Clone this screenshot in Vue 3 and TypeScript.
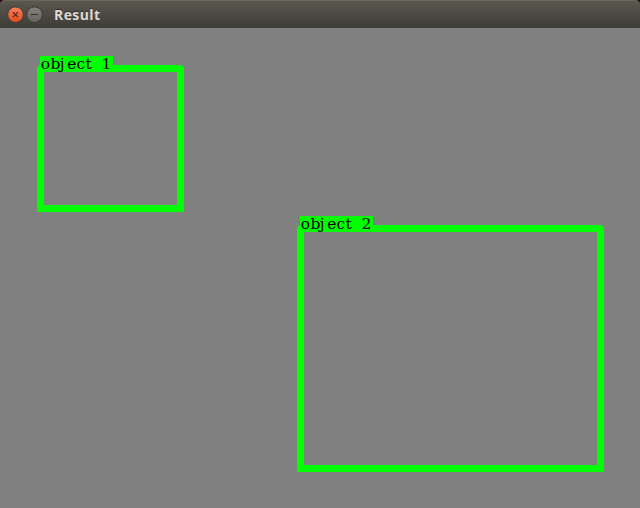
<script setup lang="ts">
interface Detection {
  label: string
  x: number
  y: number
  width: number
  height: number
}

const detections: Detection[] = [
  { label: 'object 1', x: 40, y: 40, width: 140, height: 140 },
  { label: 'object 2', x: 300, y: 200, width: 300, height: 240 },
]
const glyphOffsets = '0.7 10.6 19.8 27.2 36.4 45.6 55 61.6'
</script>

<template>
  <main class="window">
    <header class="titlebar">
      <svg class="controls" width="40" height="18" viewBox="0 0 40 18">
        <defs>
          <linearGradient id="close" x1="0" y1="0" x2="0" y2="1">
            <stop offset="0" stop-color="#f58058" />
            <stop offset="1" stop-color="#dc4d20" />
          </linearGradient>
          <linearGradient id="minimize" x1="0" y1="0" x2="0" y2="1">
            <stop offset="0" stop-color="#85827a" />
            <stop offset="1" stop-color="#64625b" />
          </linearGradient>
        </defs>
        <circle cx="9.5" cy="8.7" r="7.8" fill="url(#close)" stroke="#35322d" stroke-width="0.8" />
        <path d="M7 6.2l5 5M12 6.2l-5 5" stroke="#4a2418" stroke-width="1.1" />
        <circle cx="28.5" cy="8.7" r="7.8" fill="url(#minimize)" stroke="#35322d" stroke-width="0.8" />
        <path d="M25 8.5h7" stroke="#34332e" />
      </svg>
      <h1 class="title">Result</h1>
    </header>
    <svg class="canvas" width="640" height="480" viewBox="0 0 640 480">
      <g v-for="d in detections" :key="d.label">
        <rect
          class="outline"
          :x="d.x + 0.5"
          :y="d.y + 0.5"
          :width="d.width"
          :height="d.height"
        />
        <g :transform="`translate(${d.x} ${d.y - 12})`">
          <rect class="tag" width="73" height="16" />
          <text class="label" :x="glyphOffsets" y="13">{{ d.label }}</text>
        </g>
      </g>
    </svg>
  </main>
</template>

<style>
body {
  margin: 0;
  background: #808080;
}
</style>

<style scoped>
.window {
  width: 640px;
  height: 508px;
  overflow: hidden;
  background: #2c001e;
}
.titlebar {
  box-sizing: border-box;
  height: 28px;
  display: flex;
  align-items: center;
  gap: 8px;
  padding: 1px 6px 0;
  border-radius: 5px 5px 0 0;
  background: linear-gradient(#5b584f, #3d3c37);
  box-shadow: inset 0 1px #69665c;
}
.controls {
  flex: none;
}
.title {
  margin: 0;
  padding-top: 1px;
  color: #dfdbd2;
  font: 700 14px/20px "Open Sans", sans-serif;
  letter-spacing: 0.4px;
  text-shadow: 0 -1px #302e29;
}
.canvas {
  display: block;
  background: #808080;
}
.outline {
  fill: none;
  stroke: #00ff00;
  stroke-width: 7;
  stroke-linejoin: round;
  shape-rendering: crispEdges;
}
.tag {
  fill: #00ff00;
}
.label {
  fill: #000;
  font: 15.5px "DejaVu Serif", serif;
  white-space: pre;
}
</style>
